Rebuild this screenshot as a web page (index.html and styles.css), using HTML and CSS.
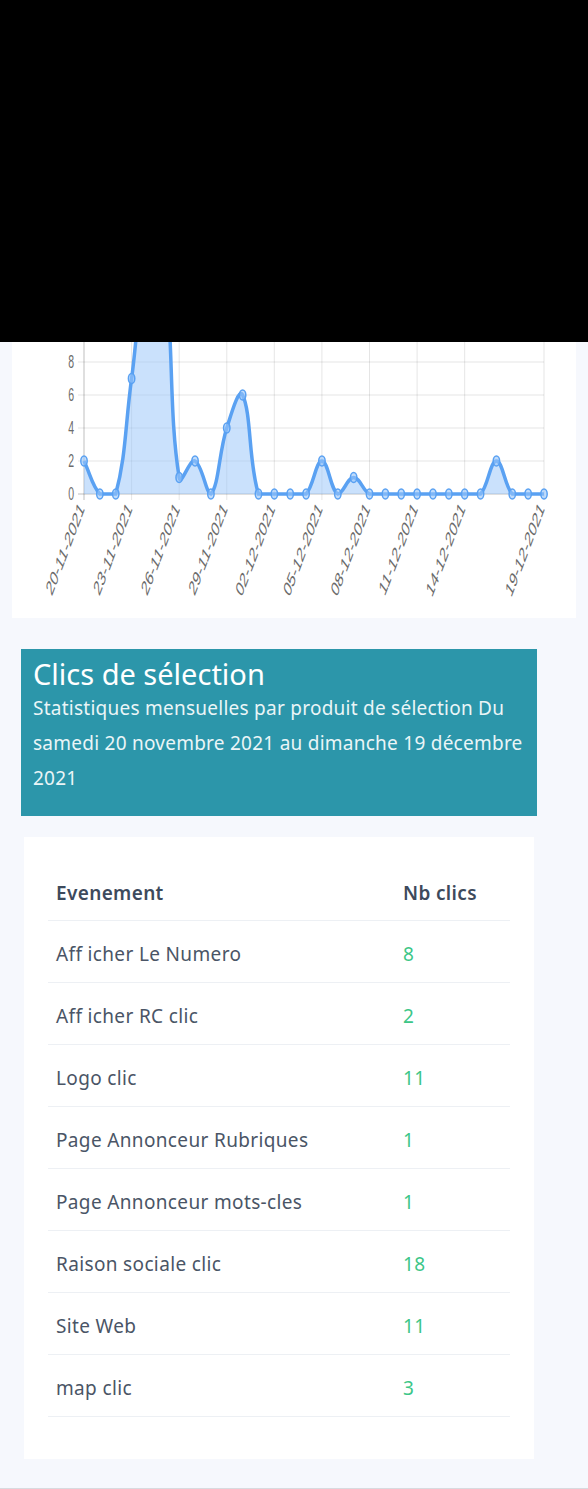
FILE: index.html
```html
<!DOCTYPE html>
<html lang="fr">
<head>
<meta charset="utf-8">
<title>Clics de sélection</title>
<link rel="stylesheet" href="styles.css">
</head>
<body>
<div class="overlay-top"></div>

<section class="chart-card">
  <svg class="chart" width="564" height="276" viewBox="12 342 564 276">
    <g class="hgrid">
      <line x1="78" y1="263" x2="544" y2="263"/>
      <line x1="78" y1="296" x2="544" y2="296"/>
      <line x1="78" y1="329" x2="544" y2="329"/>
      <line x1="78" y1="362" x2="544" y2="362"/>
      <line x1="78" y1="395" x2="544" y2="395"/>
      <line x1="78" y1="428" x2="544" y2="428"/>
      <line x1="78" y1="461" x2="544" y2="461"/>
    </g>
    <g class="vgrid">
      <line x1="131.6" y1="250" x2="131.6" y2="500"/>
      <line x1="179.2" y1="250" x2="179.2" y2="500"/>
      <line x1="226.8" y1="250" x2="226.8" y2="500"/>
      <line x1="274.3" y1="250" x2="274.3" y2="500"/>
      <line x1="321.9" y1="250" x2="321.9" y2="500"/>
      <line x1="369.5" y1="250" x2="369.5" y2="500"/>
      <line x1="417.1" y1="250" x2="417.1" y2="500"/>
      <line x1="464.7" y1="250" x2="464.7" y2="500"/>
      <line x1="544" y1="250" x2="544" y2="500"/>
    </g>
    <g class="axis">
      <line x1="84" y1="250" x2="84" y2="500"/>
      <line x1="78" y1="494" x2="544" y2="494"/>
    </g>
    <g class="ylabels">
      <text transform="translate(74 362) scale(1 1.75)" dy="0.35em">8</text>
      <text transform="translate(74 395) scale(1 1.75)" dy="0.35em">6</text>
      <text transform="translate(74 428) scale(1 1.75)" dy="0.35em">4</text>
      <text transform="translate(74 461) scale(1 1.75)" dy="0.35em">2</text>
      <text transform="translate(74 494) scale(1 1.75)" dy="0.35em">0</text>
    </g>
    <g class="xlabels">
      <text transform="translate(85 509) scale(1 1.85) rotate(-55)">20-11-2021</text>
      <text transform="translate(132.6 509) scale(1 1.85) rotate(-55)">23-11-2021</text>
      <text transform="translate(180.2 509) scale(1 1.85) rotate(-55)">26-11-2021</text>
      <text transform="translate(227.8 509) scale(1 1.85) rotate(-55)">29-11-2021</text>
      <text transform="translate(275.3 509) scale(1 1.85) rotate(-55)">02-12-2021</text>
      <text transform="translate(322.9 509) scale(1 1.85) rotate(-55)">05-12-2021</text>
      <text transform="translate(370.5 509) scale(1 1.85) rotate(-55)">08-12-2021</text>
      <text transform="translate(418.1 509) scale(1 1.85) rotate(-55)">11-12-2021</text>
      <text transform="translate(465.7 509) scale(1 1.85) rotate(-55)">14-12-2021</text>
      <text transform="translate(545 509) scale(1 1.85) rotate(-55)">19-12-2021</text>
    </g>
    <path id="area" class="area" d=""/>
    <path id="line" class="line" d=""/>
    <g id="points" class="points"></g>
  </svg>
</section>

<section class="banner">
  <h2 class="banner-title">Clics de sélection</h2>
  <p class="banner-text">Statistiques mensuelles par produit de sélection Du samedi 20 novembre 2021 au dimanche 19 décembre 2021</p>
</section>

<section class="table-card">
  <table class="stats">
    <thead>
      <tr><th class="col-event">Evenement</th><th class="col-count">Nb clics</th></tr>
    </thead>
    <tbody>
      <tr><td>Aff icher Le Numero</td><td class="count">8</td></tr>
      <tr><td>Aff icher RC clic</td><td class="count">2</td></tr>
      <tr><td>Logo clic</td><td class="count">11</td></tr>
      <tr><td>Page Annonceur Rubriques</td><td class="count">1</td></tr>
      <tr><td>Page Annonceur mots-cles</td><td class="count">1</td></tr>
      <tr><td>Raison sociale clic</td><td class="count">18</td></tr>
      <tr><td>Site Web</td><td class="count">11</td></tr>
      <tr><td>map clic</td><td class="count">3</td></tr>
    </tbody>
  </table>
</section>

<div class="page-end"></div>

<script src="chart.js"></script>
</body>
</html>
```

FILE: styles.css
```css
* { box-sizing: border-box; }

html, body {
  margin: 0;
  padding: 0;
}

body {
  background: #f6f8fd;
  font-family: "Noto Sans", "Open Sans", sans-serif;
  color: #4a5566;
  width: 588px;
}

.overlay-top {
  height: 342px;
  background: #000;
}

.chart-card {
  margin: 0 12px;
  height: 276px;
  background: #fff;
  overflow: hidden;
}

.chart {
  display: block;
}

.hgrid line,
.vgrid line {
  stroke: rgba(0, 0, 0, 0.1);
  stroke-width: 1;
}

.axis line {
  stroke: rgba(0, 0, 0, 0.25);
  stroke-width: 1;
}

.ylabels text,
.xlabels text {
  font-family: "Liberation Sans", Arial, sans-serif;
  fill: #6b6b6b;
  text-anchor: end;
}

.ylabels text { font-size: 10.5px; }
.xlabels text { font-size: 11.5px; }

.area {
  fill: rgba(150, 196, 250, 0.5);
  stroke: none;
}

.line {
  fill: none;
  stroke: #5aa1f2;
  stroke-width: 3.5;
}

.points ellipse {
  fill: rgba(150, 196, 250, 0.6);
  stroke: #5aa1f2;
  stroke-width: 1.5;
}

.banner {
  margin: 31px 0 0 21px;
  width: 516px;
  height: 167px;
  padding: 8px 4px 0 12px;
  background: #2c96aa;
  color: #fff;
}

.banner-title {
  margin: 0;
  font-size: 29px;
  font-weight: 400;
  line-height: 34px;
}

.banner-text {
  margin: 0;
  font-size: 19px;
  line-height: 35px;
  letter-spacing: 0.25px;
  color: #eaf5f7;
}

.table-card {
  margin: 21px 0 0 24px;
  width: 510px;
  height: 622px;
  padding: 28px 24px 0;
  background: #fff;
}

.stats {
  width: 462px;
  border-collapse: collapse;
  font-size: 19px;
  letter-spacing: 0.35px;
}

.stats th {
  text-align: left;
  font-weight: 600;
  color: #3d4a5c;
  line-height: 27px;
  padding: 15px 8px 13px;
  border-bottom: 1px solid #edf0f4;
}

.stats td {
  line-height: 27px;
  padding: 20px 8px 14px;
  border-bottom: 1px solid #edf0f4;
  color: #4a5566;
}

.stats .col-event { width: 347px; }

.stats td.count {
  color: #3cc687;
}

.page-end {
  margin-top: 29px;
  height: 1px;
  background: #d8dadf;
}
```

FILE: chart.js
```js
(function () {
  var data = [2,0,0,7,14,14,1,2,0,4,6,0,0,0,0,2,0,1,0,0,0,0,0,0,0,0,2,0,0,0];
  var x0 = 84, x1 = 544, yz = 494, k = 16.5, S = 1.75, t = 0.4;
  var n = data.length;
  var pts = data.map(function (v, i) {
    return { x: x0 + i * (x1 - x0) / (n - 1), y: yz - v * k };
  });
  var cps = pts.map(function (c, i) {
    var p = pts[i - 1] || c, nx = pts[i + 1] || c;
    var d01 = Math.hypot(c.x - p.x, (c.y - p.y) / S);
    var d12 = Math.hypot(nx.x - c.x, (nx.y - c.y) / S);
    var sum = d01 + d12;
    var s01 = sum ? d01 / sum : 0, s12 = sum ? d12 / sum : 0;
    var fa = t * s01, fb = t * s12;
    var prev = { x: c.x - fa * (nx.x - p.x), y: c.y - fa * (nx.y - p.y) };
    var next = { x: c.x + fb * (nx.x - p.x), y: c.y + fb * (nx.y - p.y) };
    prev.y = Math.min(prev.y, yz); next.y = Math.min(next.y, yz);
    return { prev: prev, next: next };
  });
  var d = 'M' + pts[0].x + ' ' + pts[0].y;
  for (var i = 1; i < n; i++) {
    var a = cps[i - 1].next, b = cps[i].prev, c = pts[i];
    d += ' C' + a.x.toFixed(2) + ' ' + a.y.toFixed(2) + ' ' + b.x.toFixed(2) + ' ' + b.y.toFixed(2) + ' ' + c.x.toFixed(2) + ' ' + c.y.toFixed(2);
  }
  document.getElementById('line').setAttribute('d', d);
  document.getElementById('area').setAttribute('d', d + ' L' + x1 + ' ' + yz + ' L' + x0 + ' ' + yz + ' Z');
  var g = document.getElementById('points');
  var ns = 'http://www.w3.org/2000/svg';
  pts.forEach(function (p) {
    var e = document.createElementNS(ns, 'ellipse');
    e.setAttribute('cx', p.x.toFixed(2));
    e.setAttribute('cy', p.y.toFixed(2));
    e.setAttribute('rx', '3.2');
    e.setAttribute('ry', '5');
    g.appendChild(e);
  });
})();
```
